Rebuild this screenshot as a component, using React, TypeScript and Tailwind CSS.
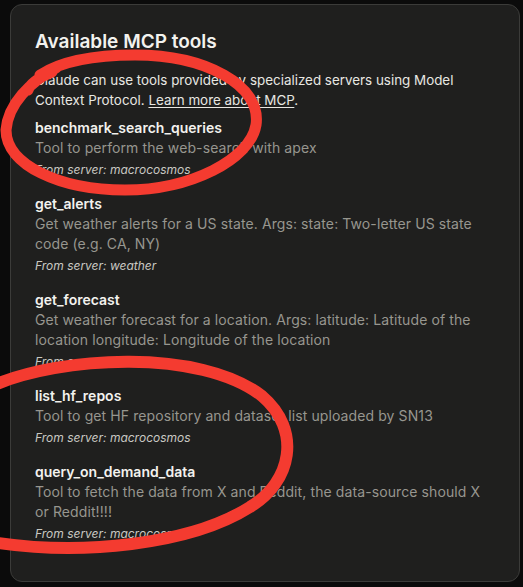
const tools = [
  {
    name: "benchmark_search_queries",
    desc: "Tool to perform the web-search with apex",
    server: "macrocosmos",
  },
  {
    name: "get_alerts",
    desc: "Get weather alerts for a US state. Args: state: Two-letter US state code (e.g. CA, NY)",
    server: "weather",
  },
  {
    name: "get_forecast",
    desc: "Get weather forecast for a location. Args: latitude: Latitude of the location longitude: Longitude of the location",
    server: "weather",
  },
  {
    name: "list_hf_repos",
    desc: "Tool to get HF repository and dataset list uploaded by SN13",
    server: "macrocosmos",
  },
  {
    name: "query_on_demand_data",
    desc: "Tool to fetch the data from X and Reddit, the data-source should X or Reddit!!!!",
    server: "macrocosmos",
  },
];

export default function App() {
  return (
    <div className="relative w-[523px] h-[587px] overflow-hidden bg-[#0b0b0b] pt-1 pl-2.5 pr-[3px] font-['Inter',sans-serif]">
      <div className="h-[578px] rounded-xl border border-[#3b3b39] bg-[#1f1f1e] pl-6 pr-9 pt-[23px]">
        <h2 className="text-[19px] leading-7 font-semibold text-[#f3f2ee]">Available MCP tools</h2>
        <p className="mt-3.5 text-[13.4px] leading-5 text-[#e8e7e2]">
          Claude can use tools provided by specialized servers using Model Context Protocol.{" "}
          <span className="underline underline-offset-2">Learn more about MCP</span>.
        </p>
        <div className="mt-2 flex flex-col gap-4">
          {tools.map((t) => (
            <div key={t.name}>
              <div className="text-[14px] leading-5 font-semibold text-[#f3f2ee]">{t.name}</div>
              <div className="text-[14px] leading-5 tracking-[0.1px] text-[#97968f]">{t.desc}</div>
              <div className="mt-1 text-[12px] leading-4 italic text-[#c9c8c2]">From server: {t.server}</div>
            </div>
          ))}
        </div>
      </div>
      <svg className="pointer-events-none absolute inset-0" width="523" height="587" viewBox="0 0 523 587" fill="none">
        <path
          d="M52 72 C38 78 30 84 28 90 M56 68 C30 82 8 104 6 130 C6 165 60 190 125 190 C190 190 250 160 256 125 C262 85 205 55 135 55 C90 55 60 62 40 75"
          stroke="#f43b30"
          strokeWidth="11"
          strokeLinecap="round"
        />
        <path
          d="M-8 386 C60 356 200 348 262 396 C302 430 292 482 250 507 C190 545 80 556 -8 542"
          stroke="#f43b30"
          strokeWidth="12"
          strokeLinecap="round"
        />
      </svg>
    </div>
  );
}
